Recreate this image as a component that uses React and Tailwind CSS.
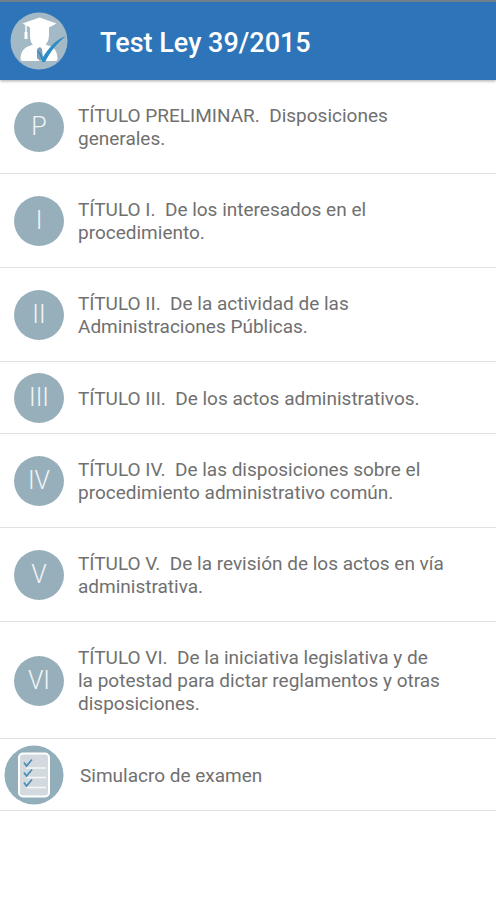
const titles = [
  { numeral: 'P', text: 'TÍTULO PRELIMINAR.\u00a0 Disposiciones generales.' },
  { numeral: 'I', text: 'TÍTULO I.\u00a0 De los interesados en el procedimiento.' },
  { numeral: 'II', text: 'TÍTULO II.\u00a0 De la actividad de las Administraciones Públicas.' },
  { numeral: 'III', text: 'TÍTULO III.\u00a0 De los actos administrativos.' },
  { numeral: 'IV', text: 'TÍTULO IV.\u00a0 De las disposiciones sobre el procedimiento administrativo común.' },
  { numeral: 'V', text: 'TÍTULO V.\u00a0 De la revisión de los actos en vía administrativa.' },
  {
    numeral: 'VI',
    text: 'TÍTULO VI.\u00a0 De la iniciativa legislativa y de la potestad para dictar reglamentos y otras disposiciones.',
  },
];

function GraduateLogo() {
  return (
    <svg viewBox="0 0 58 58" className="size-[58px] shrink-0" aria-hidden="true">
      <circle cx="29" cy="29" r="28.5" fill="#a3b9c6" />
      {/* Shoulders */}
      <path d="M10.500 47c0-7 4-12 9-13l5-2h10l5 2c5 1 8 6 8 13q0 2-2 2h-33q-2 0-2-2z" fill="#fff" />
      {/* Head and cap */}
      <path d="M20 12h19v11c0 5-2 8-4 10l-6 4-6-4c-2-2-3-5-3-10z" fill="#fff" />
      <path d="M12.500 11.500 29.500 5.500l17 6-7.500 4H20z" fill="#fff" />
      <path d="M16 12v12" stroke="#fff" strokeWidth="1.500" />
      <path d="M16 20v7" stroke="#fff" strokeWidth="3" />
      {/* Tie and tick */}
      <path d="m27 37 3-2 2 2 1 10-3 2-3-3z" fill="#7d9fb3" />
      <path d="M26.500 39c3 0 5 3 6.500 6 5-8 12-17 23-21-9 7-15 15-21 26h-3c-1-5-2.500-8-5.500-11z" fill="#2f8cc6" />
    </svg>
  );
}

function ChecklistIcon() {
  return (
    <svg viewBox="0 0 60 60" className="size-[60px] shrink-0" aria-hidden="true">
      <circle cx="30" cy="30" r="29.500" fill="#93aebb" />
      <rect x="15" y="8.500" width="30" height="43" rx="4" fill="#d3dadf" stroke="#fff" strokeWidth="2" />
      <g stroke="#f5f7f8" strokeWidth="1.500">
        <path d="M22 23h20M22 32.500h20M22 42.500h20" />
      </g>
      <g fill="none" stroke="#4c8fb5" strokeWidth="1.750">
        <path d="m20 17.500 2.500 3.500 5.500-6.500M20 27.500l2.500 3.500 5.500-6.500M20 37.500l2.500 3.500 5.500-6.500" />
      </g>
    </svg>
  );
}

export default function App() {
  return (
    <div className="min-h-screen bg-white font-[Roboto,sans-serif] text-[#707070]">
      <header className="flex h-20 items-center gap-8 border-t-2 border-[#6f7f8c] bg-[#2d74b9] pl-[10px] shadow-[0_1px_3px_rgba(0,0,0,0.35)]">
        <GraduateLogo />
        <h1 className="pt-1 text-[27px] font-medium leading-8 text-white">Test Ley 39/2015</h1>
      </header>

      <main>
        <ul>
          {titles.map((title) => (
            <li key={title.numeral} className="border-b border-[#e2e2e2]">
              <button
                type="button"
                className="flex min-h-[71px] w-full items-center gap-[14px] pt-6 pb-[23px] pl-[14px] pr-[50px] text-left"
              >
                <span className="-my-4 flex size-[50px] shrink-0 items-center justify-center rounded-full bg-[#97afbb] text-[25px] font-light text-[#f2f5f7]">
                  {title.numeral}
                </span>
                <span className="text-[19px] leading-[23px]">{title.text}</span>
              </button>
            </li>
          ))}
          <li className="border-b border-[#e2e2e2]">
            <button
              type="button"
              className="flex min-h-[71px] w-full items-center gap-4 pt-6 pb-[23px] pl-1 pr-[50px] text-left"
            >
              <span className="-my-5 shrink-0">
                <ChecklistIcon />
              </span>
              <span className="text-[19px] leading-[23px]">Simulacro de examen</span>
            </button>
          </li>
        </ul>
      </main>
    </div>
  );
}
